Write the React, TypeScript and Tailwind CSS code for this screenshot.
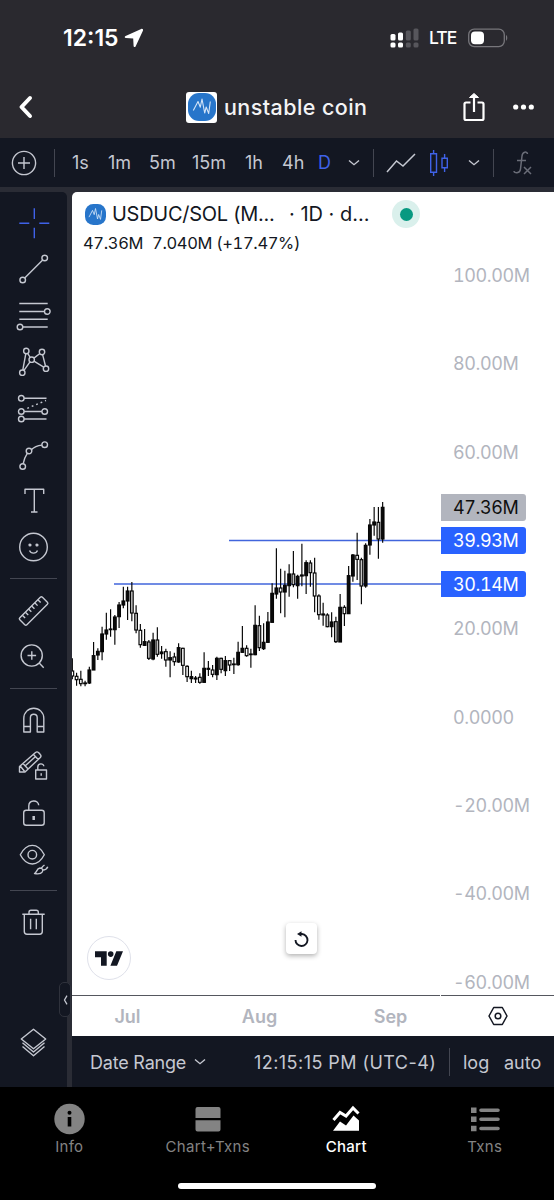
import type { ReactNode } from "react";

// [high, body top, body bottom, low, body fill], three units per pixel
const candles = [
  [535, 573, 588, 598, 0],
  [578, 589, 599, 617, 0],
  [572, 598, 611, 619, 0],
  [602, 609, 611, 619, 1],
  [560, 570, 609, 612, 1],
  [486, 527, 570, 570, 1],
  [505, 514, 525, 540, 1],
  [440, 462, 515, 541, 1],
  [398, 450, 462, 479, 1],
  [388, 447, 449, 470, 1],
  [405, 411, 449, 494, 1],
  [366, 375, 410, 444, 1],
  [320, 363, 375, 385, 1],
  [320, 333, 363, 420, 1],
  [306, 333, 399, 424, 2],
  [376, 400, 450, 460, 2],
  [432, 451, 494, 503, 0],
  [447, 485, 496, 498, 1],
  [480, 486, 535, 540, 2],
  [458, 480, 537, 541, 1],
  [442, 480, 523, 530, 2],
  [498, 516, 521, 536, 1],
  [506, 515, 540, 560, 0],
  [514, 533, 540, 592, 1],
  [518, 531, 545, 557, 0],
  [490, 503, 546, 548, 1],
  [503, 505, 556, 585, 0],
  [556, 559, 590, 606, 0],
  [572, 590, 596, 609, 1],
  [588, 594, 597, 609, 1],
  [580, 592, 607, 611, 0],
  [517, 565, 607, 608, 1],
  [543, 565, 568, 588, 1],
  [555, 570, 583, 592, 0],
  [530, 535, 584, 600, 1],
  [533, 535, 568, 580, 2],
  [528, 542, 572, 588, 1],
  [541, 542, 555, 573, 0],
  [533, 552, 554, 582, 1],
  [485, 517, 554, 557, 1],
  [438, 505, 517, 518, 1],
  [496, 505, 527, 530, 0],
  [506, 522, 524, 563, 1],
  [376, 436, 524, 526, 1],
  [407, 437, 503, 513, 2],
  [430, 487, 506, 510, 1],
  [396, 426, 487, 489, 1],
  [310, 340, 427, 427, 1],
  [205, 324, 342, 356, 1],
  [266, 324, 336, 400, 0],
  [272, 316, 336, 412, 1],
  [253, 282, 317, 350, 1],
  [213, 282, 314, 322, 2],
  [284, 289, 317, 356, 1],
  [191, 285, 288, 319, 1],
  [241, 248, 287, 342, 1],
  [241, 249, 278, 320, 2],
  [233, 279, 348, 397, 0],
  [343, 348, 404, 419, 0],
  [368, 402, 405, 437, 1],
  [400, 405, 440, 442, 2],
  [397, 426, 440, 472, 1],
  [410, 425, 485, 489, 2],
  [342, 382, 486, 486, 1],
  [376, 382, 401, 438, 0],
  [258, 287, 401, 402, 1],
  [222, 225, 288, 305, 1],
  [158, 226, 238, 300, 0],
  [233, 239, 318, 373, 2],
  [190, 196, 318, 323, 1],
  [117, 135, 195, 224, 1],
  [81, 126, 135, 167, 1],
  [81, 127, 177, 236, 2],
  [66, 82, 177, 188, 1],
];

const bodyFills = ["#ffffff", "#0b0b0b", "#c4c4c4"];

const prices = ["100.00M", "80.00M", "60.00M", "", "20.00M", "0.0000", "-20.00M", "-40.00M", "-60.00M"];

function Tool({ children, className = "" }: { children: ReactNode; className?: string }) {
  return (
    <button className={`flex h-[46.3px] w-[68px] shrink-0 items-center justify-center text-[#c5c8d1] ${className}`}>
      <svg
        width={36}
        height={36}
        viewBox="-18 -18 36 36"
        fill="none"
        stroke="currentColor"
        strokeWidth={1.4}
        strokeLinejoin="round"
      >
        {children}
      </svg>
    </button>
  );
}

function Divider() {
  return <div className="my-2 ml-[10px] h-px w-[47px] shrink-0 bg-[#434651]" />;
}

function Separator() {
  return <div className="h-7 w-px shrink-0 bg-[#434651]" />;
}

function Chevron() {
  return (
    <svg width={12} height={8} viewBox="0 0 12 8" fill="none" stroke="#c5c8d1" strokeWidth={1.4} className="shrink-0">
      <path d="m1 1.5 5 4.2 5-4.2" />
    </svg>
  );
}

function CoinLogo({ size }: { size: number }) {
  return (
    <svg width={size} height={size} viewBox="0 0 28 28" className="shrink-0">
      <rect width={28} height={28} rx={11} fill="#2775ca" />
      <path
        d="m5.300 17.500 4.700-9 2.300 5.700L14 6l2.700 14 1.500-6 2.500 6.500 1.600-12"
        fill="none"
        stroke="#d5e5f8"
        strokeWidth={1.1}
        strokeLinejoin="round"
      />
    </svg>
  );
}

function StatusBar() {
  return (
    <div className="flex h-[76px] items-center pl-[63px] pr-[46px] text-white">
      <span className="w-[61px] text-[23px] font-semibold tracking-[0px]">12:15</span>
      <svg width={20} height={20} viewBox="0 0 20 20" fill="#fff">
        <path d="M17.200.9 1.600 8c-1.300.6-1.100 2 .3 2.100l7.300.5.4 7.300c.1 1.400 1.500 1.600 2.100.3L18.900 2.700c.6-1.200-.4-2.300-1.700-1.800Z" />
      </svg>
      <svg width={29} height={20} viewBox="0 0 29 20" className="ml-auto">
        <g fill="#fff">
          <rect x={0.5} y={6} width={5} height={6.5} rx={1.5} />
          <rect x={0.5} y={14.5} width={5} height={5} rx={1.5} />
          <rect x={8} y={4.5} width={5} height={8} rx={1.5} />
          <rect x={8} y={14.5} width={5} height={5} rx={1.5} />
        </g>
        <g fill="#57565c">
          <rect x={15.8} y={2.5} width={5} height={10} rx={1.5} />
          <rect x={15.8} y={14.5} width={5} height={5} rx={1.5} />
          <rect x={23.5} y={0.5} width={5} height={12} rx={1.5} />
          <rect x={23.5} y={14.5} width={5} height={5} rx={1.5} />
        </g>
      </svg>
      <span className="ml-[10px] w-[39px] text-[17.5px] font-medium tracking-[-0.9px]">LTE</span>
      <svg width={40} height={20} viewBox="0 0 40 20">
        <rect x={0.7} y={1.2} width={35.6} height={17.4} rx={5.5} fill="none" stroke="#77767b" strokeWidth={1.3} />
        <rect x={3} y={3.5} width={13} height={12.8} rx={4} fill="#fff" />
        <path d="M38 7c1.700.7 1.700 5 0 5.700V7Z" fill="#77767b" />
      </svg>
    </div>
  );
}

function NavBar() {
  return (
    <div className="flex h-[62px] items-center pl-[17px] pr-[19px]">
      <svg width={18} height={24} viewBox="0 0 18 24" fill="none" stroke="#fff" strokeWidth={4}>
        <path d="M13 3 4.500 12l8.500 9" strokeLinecap="round" strokeLinejoin="round" />
      </svg>
      <div className="ml-[151px] flex size-[31px] items-center justify-center rounded-[3px] bg-white">
        <CoinLogo size={28} />
      </div>
      <span className="ml-[7px] whitespace-nowrap text-[21.5px] font-medium tracking-[0.42px] text-[#f3f3f5]">
        unstable coin
      </span>
      <svg width={24} height={32} viewBox="0 0 24 32" fill="none" stroke="#fff" strokeWidth={2.2} className="ml-auto">
        <path d="M8.500 11.500H4A1.500 1.500 0 0 0 2.500 13v14.500A1.500 1.500 0 0 0 4 29h16a1.500 1.500 0 0 0 1.500-1.500V13a1.500 1.500 0 0 0-1.500-1.500h-4.500" />
        <path d="M12 21V4" />
        <path d="m7.500 6.500 4.500-4 4.500 4Z" fill="#fff" strokeWidth={1} />
      </svg>
      <svg width={22} height={6} viewBox="0 0 22 6" fill="#fff" className="ml-[27px]">
        <circle cx={2.7} cy={3} r={2.6} />
        <circle cx={10.5} cy={3} r={2.6} />
        <circle cx={18.3} cy={3} r={2.6} />
      </svg>
    </div>
  );
}

function ChartToolbar() {
  return (
    <div className="flex h-[49px] items-center bg-[#131722] pl-[11px] text-[18px] text-[#c5c8d1]">
      <svg width={26} height={26} viewBox="0 0 26 26" fill="none" stroke="currentColor" strokeWidth={1.4}>
        <circle cx={13} cy={13} r={11.6} />
        <path d="M7 13h12M13 7v12" />
      </svg>
      <div className="ml-[17px]">
        <Separator />
      </div>
      <div className="ml-[17px] flex">
        <span className="w-[36px]">1s</span>
        <span className="w-[41px]">1m</span>
        <span className="w-[43px]">5m</span>
        <span className="w-[53px]">15m</span>
        <span className="w-[37px]">1h</span>
        <span className="w-[36px]">4h</span>
        <span className="w-[30px] text-[#3f62e8]">D</span>
      </div>
      <Chevron />
      <div className="ml-[13px]">
        <Separator />
      </div>
      <svg width={30} height={22} viewBox="0 0 30 22" fill="none" stroke="currentColor" strokeWidth={1.5} className="ml-[12px]">
        <path d="M1 20 10.500 9l6.500 5L29 2" />
      </svg>
      <svg width={20} height={28} viewBox="0 0 20 28" fill="none" stroke="#3f62e8" strokeWidth={1.4} className="ml-[13px]">
        <path d="M1.700 4.700h5.800v18.600H1.700zM4.600 1v3.700m0 18.600V27M13 9.200h5.300v9.600H13zM15.600 5v4.200m0 9.600V23" />
      </svg>
      <div className="ml-[19px]">
        <Chevron />
      </div>
      <div className="ml-[13px]">
        <Separator />
      </div>
      <svg width={20} height={26} viewBox="0 0 20 26" fill="none" stroke="#6a6d78" strokeWidth={1.5} className="ml-[19px]">
        <path d="M1 21c0 2.500 6 3 6.500-2L9 6c.5-4.500 5-5 5.500-2M4 10.500h9M11 17l7 7m0-7-7 7" />
      </svg>
    </div>
  );
}

function Sidebar() {
  return (
    <div className="flex w-[67px] shrink-0 flex-col rounded-tr-[5px] bg-[#131722] pb-[22px] pt-2">
      <Tool>
        <path stroke="#3f62e8" d="M-14.700.3h10M5.300.3h10M.3-14.700V-4M.3 4.700v10.600" />
      </Tool>
      <Tool>
        <circle cx={-11.3} cy={11} r={2.8} />
        <circle cx={10.7} cy={-11} r={2.8} />
        <path d="M-9.300 9 8.700-9" />
      </Tool>
      <Tool>
        <path d="M-14.700-12.500h28.400M-14.700-4.500h25.200M-14.700 3.200h28.400M-11 11h24.700" />
        <circle cx={13.3} cy={-4.5} r={2.8} />
        <circle cx={-14} cy={11} r={2.8} />
      </Tool>
      <Tool>
        <circle cx={-7.7} cy={-11} r={2.7} />
        <circle cx={8} cy={-10} r={2.7} />
        <circle cx={-11.7} cy={10.7} r={2.7} />
        <circle cx={12} cy={6.7} r={2.7} />
        <circle cx={-2.3} cy={-2.3} r={2.7} />
        <path d="m-8.200-8.300-3 16.300M-6.300-8.700l2.500 4.200M-4-.2l-6 8.600M-.1-3.900l6-4.600M8.600-7.300l2.900 11.300M0-.8l9.700 5.900" />
      </Tool>
      <Tool>
        <circle cx={-12.7} cy={-9.7} r={2.8} />
        <circle cx={-12.7} cy={3.5} r={2.8} />
        <circle cx={-12.7} cy={11} r={2.8} />
        <circle cx={10.7} cy={3.5} r={2.8} />
        <path d="M-9.900-9.700h22.400M-9.900 3.500H7.900M-9.900 11h22.400" />
        <path d="M-6.700.3 12-7.500" strokeDasharray="1.800 3" />
      </Tool>
      <Tool>
        <circle cx={-11.3} cy={11.5} r={2.8} />
        <circle cx={-5} cy={-4} r={2.8} />
        <circle cx={10.7} cy={-10.3} r={2.8} />
        <path d="M-10.800 8.700C-10 4.500-9 1.500-6.700-1.700M-2.500-5.400C0-8 4-9.500 7.900-9.900" />
      </Tool>
      <Tool>
        <path d="M-9-7v-4.700H9.700V-7M.3-11.700V11M-3 11h6.500" />
      </Tool>
      <Tool>
        <circle cx={-0.5} cy={0} r={13.8} />
        <circle cx={-4} cy={-2} r={0.9} fill="currentColor" />
        <circle cx={3} cy={-2} r={0.9} fill="currentColor" />
        <path d="M-4.500 3.500c1.500 3.500 6.500 3.500 8 0" />
      </Tool>
      <Divider />
      <Tool>
        <g transform="translate(-.4 0) rotate(-45)">
          <rect x={-16} y={-5} width={32} height={10} rx={1.5} />
          <path d="M-11-5v4m4.400-4v4m4.400-4v4m4.400-4v4m4.400-4v4m4.400-4v4" />
        </g>
      </Tool>
      <Tool>
        <circle cx={-2.3} cy={-1.5} r={10.6} />
        <path d="M-6.500-1.500h8.600M-2.200-5.800v8.600M5.200 6l4.500 4.700" />
      </Tool>
      <Divider />
      <Tool>
        <path d="M-10.200 12V-1.800a10 10 0 0 1 20 0V12H3.200V-2.300a3.400 3.400 0 0 0-6.800 0V12ZM-10.200 6.500h6.600M3.200 6.500h6.600" />
      </Tool>
      <Tool>
        <path d="M-14.500 5.500v-5L1.500-13.500c1-.8 2-.8 3 0L6.300-11.500c1 1 .8 2 0 3L-9 6H-14.500ZM-14-.2l4.500 5.500M-11-2.500l4.600 5M-.5-11.500l4.700 5M-8.700-.2 1-9" />
        <path d="M1.700 4h10.800v9H1.700zM3.800 4V1c0-4 6-4 6-.7M7.200 7.200v2.500" />
      </Tool>
      <Tool>
        <rect x={-10.3} y={-2.7} width={20.5} height={15} rx={2.5} />
        <path d="M-5.200-2.700V-7c0-6.500 9.700-6.500 9.900-.7" />
        <path d="M-.3 3v4" strokeWidth={2.5} />
      </Tool>
      <Tool>
        <path d="M-13.700-4.300c6.500-12.400 17.500-12.400 24 0-6.500 12.400-17.500 12.400-24 0Z" />
        <circle cx={-1.7} cy={-4.3} r={4.3} />
        <path d="M.5 14.500c2-.3 2-5 5.500-5.500 2.500 0 3.300 2 2.300 3.800C7 15 3 15 .5 14.500ZM7.500 9.200c1-1.700 2-2.500 3-3.200M9 11c2.500 0 4-1.500 4.800-3.300" />
      </Tool>
      <Divider />
      <Tool>
        <path d="M-11.700-7.700h22.400M-5-7.700v-2c0-1.300.7-2 2-2h5.300c1.300 0 2 .7 2 2v2M-9.700-7.700V9.500c0 1.600 1 2.700 2.700 2.700H5.600c1.700 0 2.700-1.100 2.700-2.700V-7.700M-3.400-3.300V7.300M2.300-3.300V7.300" />
      </Tool>
      <Tool className="mt-auto">
        <path d="M-.5-12.700 11.700-3-.5 6.700-12.700-3ZM-11.500.8-.5 10l11-9.200M-11.500 4.500-.5 13.700l11-9.200" />
      </Tool>
    </div>
  );
}

function Plot() {
  return (
    <svg width={369} height={803} viewBox="0 0 369 803" className="shrink-0">
      <path d="M157 348.500h212M42 391.900h327" stroke="#4165dc" strokeWidth={1.5} />
      <g transform="translate(0 288) scale(.33333)">
        {candles.map(([high, top, bottom, low, fill], i) => {
          const x = 1 + i * 12.753;
          return (
            <g key={i} stroke="#050505" strokeWidth={3.5}>
              <path d={`M${x} ${high}V${top}M${x} ${bottom}V${low}`} />
              <rect x={x - 4} y={top} width={8} height={bottom - top} fill={bodyFills[fill]} />
            </g>
          );
        })}
      </g>
    </svg>
  );
}

function Legend() {
  return (
    <div className="absolute left-[11px] top-2 text-[#131722]">
      <div className="flex h-7 items-center">
        <div className="flex w-[29px] pl-[2px]">
          <CoinLogo size={21} />
        </div>
        <span className="w-[177px] whitespace-nowrap text-[20px] tracking-[-0.27px]">USDUC/SOL (M...</span>
        <span className="w-[103px] whitespace-nowrap text-[20px]">· 1D · d...</span>
        <span className="flex size-7 items-center justify-center rounded-full bg-[#daf0ec]">
          <span className="size-[13px] rounded-full bg-[#089981]" />
        </span>
      </div>
      <div className="mt-[3px] flex h-6 items-center gap-[9px] whitespace-nowrap text-[16.5px] tabular-nums tracking-[-0.35px]">
        <span>47.36M</span>
        <span>7.040M (+17.47%)</span>
      </div>
    </div>
  );
}

function PriceAxis() {
  return (
    <div className="relative flex flex-1 flex-col pt-[40px] text-[18px] leading-none tabular-nums tracking-[-0.4px] text-[#b2b5be]">
      {prices.map((price, i) => (
        <span key={i} className="flex h-[88.3px] shrink-0 items-center whitespace-nowrap pl-[12px]">
          {price}
        </span>
      ))}
      <span className="absolute left-0 top-[302px] flex h-[27px] w-[85px] items-center rounded-r-[3px] bg-[#b2b5be] pl-[12px] pt-px text-[#0f0f0f]">
        47.36M
      </span>
      <span className="absolute left-0 top-[335px] flex h-[27px] w-[85px] items-center rounded-r-[3px] bg-[#2962ff] pl-[12px] pt-px text-white">
        39.93M
      </span>
      <span className="absolute left-0 top-[379px] flex h-[26px] w-[85px] items-center rounded-r-[3px] bg-[#2962ff] pl-[12px] pt-px text-white">
        30.14M
      </span>
    </div>
  );
}

function TimeAxis() {
  return (
    <div className="flex h-[41px] gap-px">
      <div className="flex w-[368px] border-t border-[#55575e] pt-px text-[18px] font-semibold text-[#b2b5be]">
        <span className="flex w-[111px] shrink-0 items-center justify-center">Jul</span>
        <span className="flex w-[153px] shrink-0 items-center justify-center">Aug</span>
        <span className="flex w-[109px] shrink-0 items-center justify-center">Sep</span>
      </div>
      <div className="flex flex-1 items-center justify-center border-t border-[#55575e]">
        <svg width={20} height={20} viewBox="0 0 20 20" fill="none" stroke="#131722" strokeWidth={1.5}>
          <path d="M5.700 1.500h8.600l4.700 8.500-4.700 8.500H5.700L1 10Z" strokeLinejoin="round" />
          <circle cx={10} cy={10} r={2.8} />
        </svg>
      </div>
    </div>
  );
}

function ChartPanel() {
  return (
    <div className="relative h-[844px] overflow-hidden rounded-tl-[5px] bg-white">
      <div className="flex h-[803px] overflow-hidden">
        <Plot />
        <PriceAxis />
      </div>
      <TimeAxis />
      <Legend />
      <div className="absolute left-[15px] top-[744px] flex size-11 items-center justify-center rounded-full border-[1.5px] border-[#dfe1ea] bg-white">
        <svg width={28} height={15} viewBox="0 0 28 15" fill="#131722">
          <path d="M0 .3h11.700V14.700H6V6.200H0zM21.300.3H28L22 14.700h-6.600z" />
          <circle cx={15.7} cy={3.1} r={2.8} />
        </svg>
      </div>
      <div className="absolute left-[214px] top-[731px] flex size-[31px] items-center justify-center rounded-[4px] bg-white shadow-[0_2px_5px_rgba(0,0,0,0.3)]">
        <svg width={16} height={16} viewBox="0 0 16 16" fill="none" stroke="#131722" strokeWidth={1.9}>
          <path d="M6.500 3H8a6 6 0 1 1-6.500 6" />
          <path d="M3 3 7.500.2v5.600Z" fill="#131722" stroke="none" />
        </svg>
      </div>
    </div>
  );
}

function RangeBar() {
  return (
    <div className="flex h-[51px] items-center whitespace-nowrap bg-[#131722] pt-px text-[18px] text-[#c5c8d1]">
      <span className="ml-[18px] w-[104px] tracking-[-0.2px]">Date Range</span>
      <Chevron />
      <span className="ml-[48px] w-[195px] tracking-[0.45px]">12:15:15 PM (UTC-4)</span>
      <Separator />
      <span className="ml-[13px] w-[41px]">log</span>
      <span>auto</span>
    </div>
  );
}

function Tab({ label, active, children }: { label: string; active?: boolean; children: ReactNode }) {
  return (
    <div className={`flex flex-1 flex-col items-center ${active ? "font-medium text-white" : "text-[#838383]"}`}>
      <svg width={32} height={32} viewBox="0 0 32 32" fill="currentColor">
        {children}
      </svg>
      <span className="text-[15px] leading-6 tracking-[0.3px]">{label}</span>
    </div>
  );
}

function TabBar() {
  return (
    <div className="flex h-[113px] flex-col items-center bg-black">
      <div className="flex h-[96px] w-full pt-4">
        <Tab label="Info">
          <circle cx={16.5} cy={16} r={15.2} />
          <path d="M14.700 14h3.600v9.500h-3.600z" fill="#000" />
          <circle cx={16.5} cy={9.7} r={2} fill="#000" />
        </Tab>
        <Tab label="Chart+Txns">
          <path d="M6 4h20.500a2 2 0 0 1 2 2v9h-25V6a2 2 0 0 1 2-2ZM3.500 17.300h25v9.200a2 2 0 0 1-2 2h-21a2 2 0 0 1-2-2Z" />
        </Tab>
        <Tab label="Chart" active>
          <path d="m3 27.700 7-9.200 6 4 7.500-10L29 17.500v10.200Z" />
          <path d="m3.500 17 6.500-7.500 6 3.500 7-8 5.500 5.500" fill="none" stroke="currentColor" strokeWidth={3} />
        </Tab>
        <Tab label="Txns">
          <path d="M2 4.500h5.500V10H2zM2 13.500h5.500V19H2zM2 22.700h5.500v5.500H2z" />
          <path d="M12 7.300h17M12 16.300h17M12 25.500h17" stroke="currentColor" strokeWidth={3.6} strokeLinecap="round" />
        </Tab>
      </div>
      <div className="h-[6px] w-[198px] rounded-full bg-white" />
    </div>
  );
}

export default function App() {
  return (
    <div className="flex h-[1200px] w-[554px] flex-col overflow-hidden bg-[#2a2c35] font-['Inter',sans-serif]">
      <header className="h-[138px] bg-[#2a292f]">
        <StatusBar />
        <NavBar />
      </header>
      <ChartToolbar />
      <main className="relative flex h-[900px] gap-[5px] pt-[5px]">
        <Sidebar />
        <div className="flex flex-1 flex-col">
          <ChartPanel />
          <RangeBar />
        </div>
        <div className="absolute left-[59px] top-[795px] flex h-[35px] w-[12px] items-center justify-center rounded-[5px] border border-[#2f323c] bg-[#131722]">
          <svg width={5} height={10} viewBox="0 0 5 10" fill="none" stroke="#c5c8d1" strokeWidth={1.3}>
            <path d="M4 .7 1.500 5 4 9.300" />
          </svg>
        </div>
      </main>
      <TabBar />
    </div>
  );
}
